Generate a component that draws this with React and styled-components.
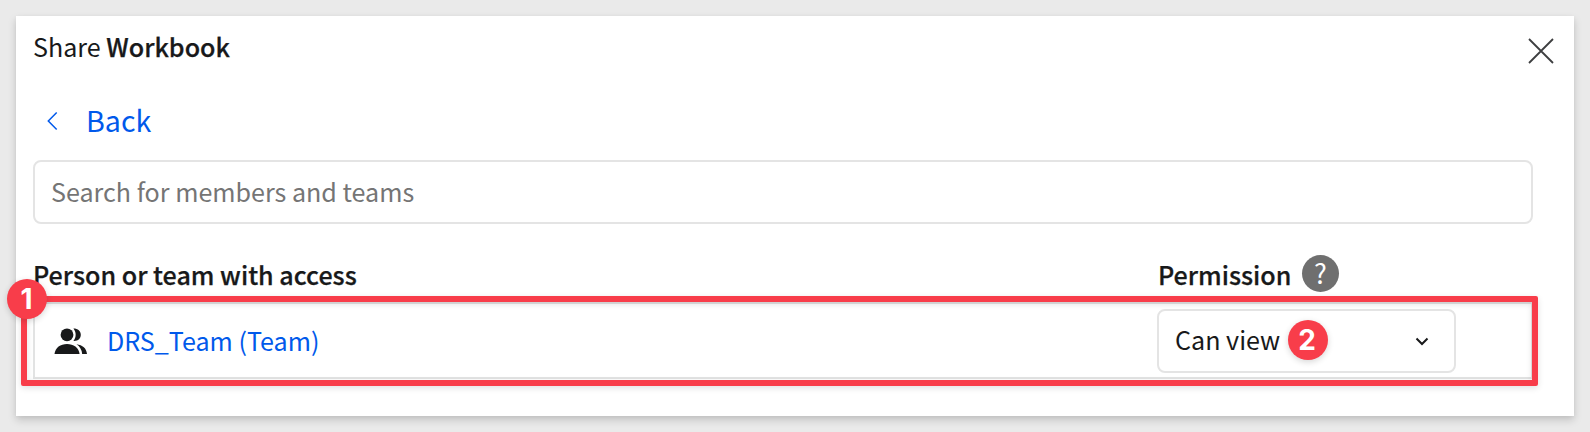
import React from "react";
import styled, { createGlobalStyle, css } from "styled-components";

const GlobalStyle = createGlobalStyle`
  *, *::before, *::after { box-sizing: border-box; }
  body {
    margin: 0;
    background: #eaeaea;
    color: #18191a;
    font-family: "Noto Sans CJK SC", "Noto Sans", sans-serif;
    font-size: 25.1px;
    line-height: 36px;
    overflow: hidden;
  }
`;

const Page = styled.div`
  height: 432px;
  padding: 16px;
`;

const Dialog = styled.section`
  height: 400px;
  padding: 12px 16px 0 17px;
  background: #fff;
  box-shadow: 0 4px 8px rgba(0, 0, 0, 0.17), 0 1px 4px rgba(0, 0, 0, 0.04);
`;

const Header = styled.header`
  display: flex;
  justify-content: space-between;
  height: 71px;
`;

const Title = styled.h1`
  margin: 0;
  font-size: inherit;
  font-weight: 400;
  white-space: pre;
`;

const Strong = styled.strong`
  font-weight: 500;
  -webkit-text-stroke: 0.25px currentColor;
`;

const CloseButton = styled.button`
  display: flex;
  width: 34px;
  height: 46px;
  padding: 0;
  align-items: center;
  justify-content: center;
  border: 0;
  background: none;
`;

const BackLink = styled.a`
  display: flex;
  align-items: center;
  width: max-content;
  height: 42px;
  padding-left: 14px;
  gap: 28px;
  color: #0059eb;
  font-size: 28.6px;
`;

const SearchInput = styled.input`
  display: block;
  width: 1500px;
  height: 64px;
  margin-top: 19px;
  padding: 0 16px 2px;
  border: 2px solid #e4e4e4;
  border-radius: 8px;
  color: inherit;
  font: inherit;
  outline: none;
  &::placeholder { color: #757575; opacity: 1; }
`;

const columns = css`
  display: grid;
  grid-template-columns: 1124px 1fr;
  align-items: center;
`;

const TableHead = styled.div`
  ${columns}
  width: 1500px;
  height: 40px;
  margin-top: 30px;
`;

const HeadCell = styled.div`
  display: flex;
  align-items: center;
  gap: 10.5px;
  padding-left: ${(p) => p.$indent || "0"};
`;

const HelpIcon = styled.span`
  display: grid;
  place-items: center;
  width: 37px;
  height: 37px;
  margin-top: -1px;
  border-radius: 50%;
  background: #6f6f6f;
  color: #fff;
  font-size: 27px;
  line-height: 33px;
  padding-bottom: 2px;
`;

const TableRow = styled.div`
  ${columns}
  grid-template-columns: 1122px 1fr;
  position: relative;
  width: 1500px;
  height: 77px;
  margin-top: 8px;
  border: 2px solid #e2e3e3;
`;

const Member = styled.div`
  display: flex;
  align-items: center;
  padding-left: 19px;
  gap: 19px;
`;

const MemberLink = styled.a`
  margin-top: -2px;
  color: #0059eb;
`;

const Select = styled.div`
  display: flex;
  position: relative;
  align-items: center;
  justify-content: space-between;
  width: 299px;
  height: 64px;
  padding: 0 25px 3px 16px;
  border: 2px solid #e4e4e4;
  border-radius: 8px;
`;

const Highlight = styled.div`
  position: absolute;
  inset: -8px -7px -9px -14px;
  border: 6px solid #f83d4a;
  border-radius: 2px;
  box-shadow: 0 2px 6px rgba(0, 0, 0, 0.12), inset 0 2px 6px rgba(0, 0, 0, 0.12);
  pointer-events: none;
`;

const Badge = styled.span`
  position: absolute;
  top: ${(p) => p.$top};
  left: ${(p) => p.$left};
  display: grid;
  place-items: center;
  width: 40px;
  height: 40px;
  border-radius: 50%;
  background: #f83d4a;
  box-shadow: 0 2px 6px rgba(0, 0, 0, 0.16);
  color: #fff;
  font: 700 28px/40px Inter, sans-serif;
  padding-right: 1px;
`;

const CloseIcon = () => (
  <svg width="26" height="26" viewBox="0 0 26 26" fill="none" stroke="#3d3e40" strokeWidth="1.8">
    <path d="M1 1 25 25M25 1 1 25" />
  </svg>
);

const BackIcon = styled(({ className }) => (
  <svg className={className} width="11" height="20" viewBox="0 0 11 20" fill="none" stroke="currentColor" strokeWidth="1.5">
    <path d="M9.7 1.5 1.3 10l8.4 8.5" />
  </svg>
))`
  margin-top: 2px;
`;

const TeamIcon = () => (
  <svg width="34" height="26" viewBox="0 0 34 26" fill="#18191a">
    <circle cx="13" cy="6.8" r="6.4" />
    <path d="M19.4.4C24 .4 26.8 3 26.8 6.8s-2.8 6.4-7.4 6.1c3-3.5 3-8.9 0-12.5Z" />
    <path d="M.5 26C1.2 19.5 6.5 16 13 16s11.8 3.5 12.600 10Z" />
    <path d="M22.5 16.2C28.6 17 32.5 20.2 33 26h-4.800c-.3-4.200-2.400-7.600-5.700-9.800Z" />
  </svg>
);

const ChevronIcon = styled(({ className }) => (
  <svg className={className} width="14" height="9" viewBox="0 0 14 9" fill="none" stroke="#18191a" strokeWidth="2">
    <path d="m1.5 1.5 5.5 5.5 5.5-5.5" />
  </svg>
))`
  margin-top: 5px;
`;

export default function App() {
  return (
    <Page>
      <GlobalStyle />
      <Dialog>
        <Header>
          <Title>Share <Strong>Workbook</Strong></Title>
          <CloseButton aria-label="Close"><CloseIcon /></CloseButton>
        </Header>
        <BackLink><BackIcon />Back</BackLink>
        <SearchInput placeholder="Search for members and teams" />
        <TableHead>
          <HeadCell><Strong>Person or team with access</Strong></HeadCell>
          <HeadCell $indent="1px">
            <Strong>Permission</Strong>
            <HelpIcon>?</HelpIcon>
          </HeadCell>
        </TableHead>
        <TableRow>
          <Member><TeamIcon /><MemberLink>DRS_Team (Team)</MemberLink></Member>
          <Select>
            Can view
            <ChevronIcon />
            <Badge $top="9.5px" $left="128.5px">2</Badge>
          </Select>
          <Highlight />
          <Badge $top="-25px" $left="-28px">1</Badge>
        </TableRow>
      </Dialog>
    </Page>
  );
}
